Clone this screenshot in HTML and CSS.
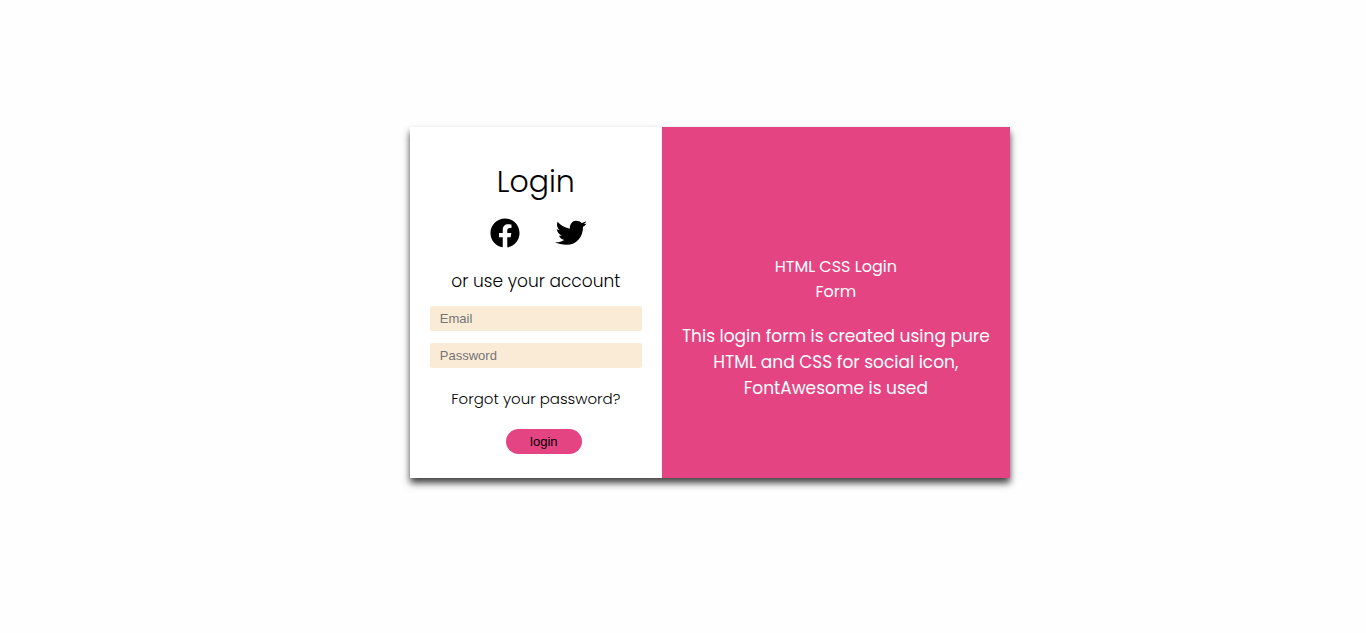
FILE: index.html
```html
<!DOCTYPE html>
<html lang="en">
<head>
<meta charset="utf-8">
<meta name="viewport" content="width=device-width, initial-scale=1">
<title>Login</title>
<link rel="stylesheet" href="styles.css">
</head>
<body>
<main class="card">
  <form class="login">
    <h1 class="login-title">Login</h1>
    <div class="social">
      <a class="social-link" href="#" aria-label="Facebook"><svg class="icon" viewBox="0 0 512 512" aria-hidden="true"><path d="M504 256C504 119 393 8 256 8S8 119 8 256c0 123.780 90.690 226.380 209.250 245V327.690h-63V256h63v-54.640c0-62.150 37-96.480 93.670-96.480 27.140 0 55.520 4.840 55.520 4.840v61h-31.280c-30.800 0-40.410 19.120-40.410 38.730V256h68.780l-11 71.690h-57.780V501C413.310 482.380 504 379.780 504 256z"/></svg></a>
      <a class="social-link" href="#" aria-label="Twitter"><svg class="icon icon-wide" viewBox="0 0 32 30" aria-hidden="true"><path d="M2.600 3.700C5.100 7 9.100 9.500 14.800 10.700C14.600 6.100 17.400 2.800 21.200 2.800C23.400 2.800 25.300 3.600 26.600 5C28.400 4.700 29.900 4.200 31.200 3.300C30.600 4.600 29.800 5.400 28.800 6.100L31.400 5.700C30.500 7 29.400 8 28.100 8.700C27.800 18.900 22.100 26.800 11.300 26.800C7 26.800 3 25.900 0 24.300C3.500 24.500 6.600 23.700 9.200 21.900C6.600 21.400 4.800 19.700 4.100 17.700L7 17.500C4 16.400 2.100 14.200 1.800 11.300L4.600 11.900C1.900 9.700 1.400 6.600 2.600 3.700Z"/></svg></a>
    </div>
    <p class="hint">or use your account</p>
    <input class="field" type="email" placeholder="Email" aria-label="Email">
    <input class="field" type="password" placeholder="Password" aria-label="Password">
    <a class="forgot" href="#">Forgot your password?</a>
    <button class="submit" type="button">login</button>
  </form>
  <section class="about">
    <h2 class="about-title">HTML CSS Login Form</h2>
    <p class="about-text">This login form is created using pure HTML and CSS for social icon, FontAwesome is used</p>
  </section>
</main>
</body>
</html>
```
FILE: styles.css
```css
* {
  box-sizing: border-box;
}

body {
  min-height: 100vh;
  margin: 0;
  padding: 20vh 0 20px 30%;
  background: #fefefe;
  color: #000;
  font-family: Poppins, Inter, sans-serif;
}

.card {
  display: flex;
  max-width: 600px;
  background: #fff;
  box-shadow: 0 5px 7px rgba(0, 0, 0, 0.75);
}

.login {
  display: flex;
  width: 42%;
  flex-direction: column;
  align-items: center;
  padding: 32px 20px 24px;
}

.login-title {
  margin: 0;
  font-size: 30px;
  font-weight: 300;
  line-height: 46px;
}

.social {
  display: flex;
  gap: 35px;
  margin-top: 13px;
  padding-left: 6px;
}

.social-link {
  display: block;
  color: inherit;
}

.icon {
  display: block;
  width: 30px;
  height: 30px;
  fill: currentColor;
}

.icon-wide {
  width: 32px;
}

.hint {
  margin: 20px 0 12px;
  font-size: 17px;
  font-weight: 300;
  line-height: 26px;
}

.field {
  width: 100%;
  height: 25px;
  margin-bottom: 12px;
  padding: 0 10px;
  border: 0;
  border-radius: 2px;
  background: #faebd7;
  font: 13px "Liberation Sans", Arial, sans-serif;
}

.field::placeholder {
  color: #757575;
}

.forgot {
  margin: 7px 0 19px;
  color: inherit;
  font-size: 15px;
  font-weight: 300;
  line-height: 23px;
  text-decoration: none;
}

.submit {
  height: 25px;
  margin-left: 16px;
  padding: 0 24px;
  border: 0;
  border-radius: 13px;
  background: #e44482;
  color: #000;
  font: 13px "Liberation Sans", Arial, sans-serif;
}

.about {
  display: flex;
  width: 58%;
  flex-direction: column;
  align-items: center;
  justify-content: flex-end;
  padding: 20px 16px 77px;
  background: #e44482;
  color: #fff;
  text-align: center;
}

.about-title {
  max-width: 156px;
  margin: 0 0 19px;
  font-size: 16px;
  font-weight: 400;
  line-height: 25px;
}

.about-text {
  margin: 0;
  font-size: 17px;
  font-weight: 400;
  line-height: 26px;
}
```
